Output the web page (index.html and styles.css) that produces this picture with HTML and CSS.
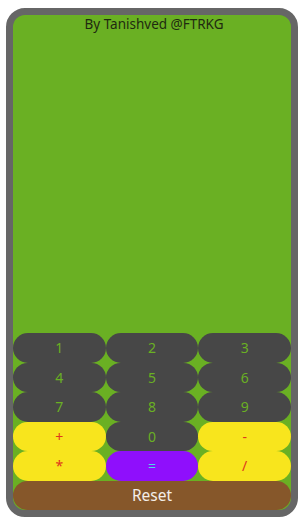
FILE: index.html
```html
<!DOCTYPE html>
<html>
<head>
<meta charset="utf-8">
<link rel="stylesheet" href="styles.css">
</head>
<body>
<div class="frame">
  <div class="screen">
    <div class="title">By Tanishved @FTRKG</div>
    <div class="display"></div>
    <div class="keys">
      <button class="key num">1</button>
      <button class="key num">2</button>
      <button class="key num">3</button>
      <button class="key num">4</button>
      <button class="key num">5</button>
      <button class="key num">6</button>
      <button class="key num">7</button>
      <button class="key num">8</button>
      <button class="key num">9</button>
      <button class="key op">+</button>
      <button class="key num">0</button>
      <button class="key op">-</button>
      <button class="key op">*</button>
      <button class="key eq">=</button>
      <button class="key op">/</button>
      <button class="key reset">Reset</button>
    </div>
  </div>
</div>
</body>
</html>
```

FILE: styles.css
```css
html, body {
  margin: 0;
  padding: 0;
  background: #ffffff;
}
body {
  padding: 8px 2px 5px 6px;
  font-family: "Noto Sans", "Open Sans", sans-serif;
}
.frame {
  width: 292px;
  height: 509px;
  box-sizing: border-box;
  border: 7px solid #666666;
  border-radius: 19px;
  background: #6ab023;
  overflow: hidden;
}
.screen {
  height: 100%;
  display: flex;
  flex-direction: column;
  border-radius: 12px;
  overflow: hidden;
}
.title {
  text-align: center;
  font-size: 13.5px;
  line-height: 16px;
  color: #1f2a10;
  padding-top: 1px;
  padding-left: 4px;
}
.display {
  flex: 1;
}
.keys {
  display: grid;
  grid-template-columns: repeat(3, 1fr);
  grid-auto-rows: 29.5px;
}
.key {
  border: none;
  margin: 0;
  padding: 0;
  border-radius: 15px;
  font-family: "Noto Sans", "Open Sans", sans-serif;
  font-size: 14px;
  cursor: pointer;
}
.num {
  background: #474747;
  color: #6ab023;
}
.op {
  background: #f8e51d;
  color: #e0361c;
}
.eq {
  background: #8f0ffc;
  color: #4fd6e6;
}
.reset {
  grid-column: 1 / 4;
  background: #86572a;
  color: #f4eee8;
  font-size: 15.5px;
}
```
